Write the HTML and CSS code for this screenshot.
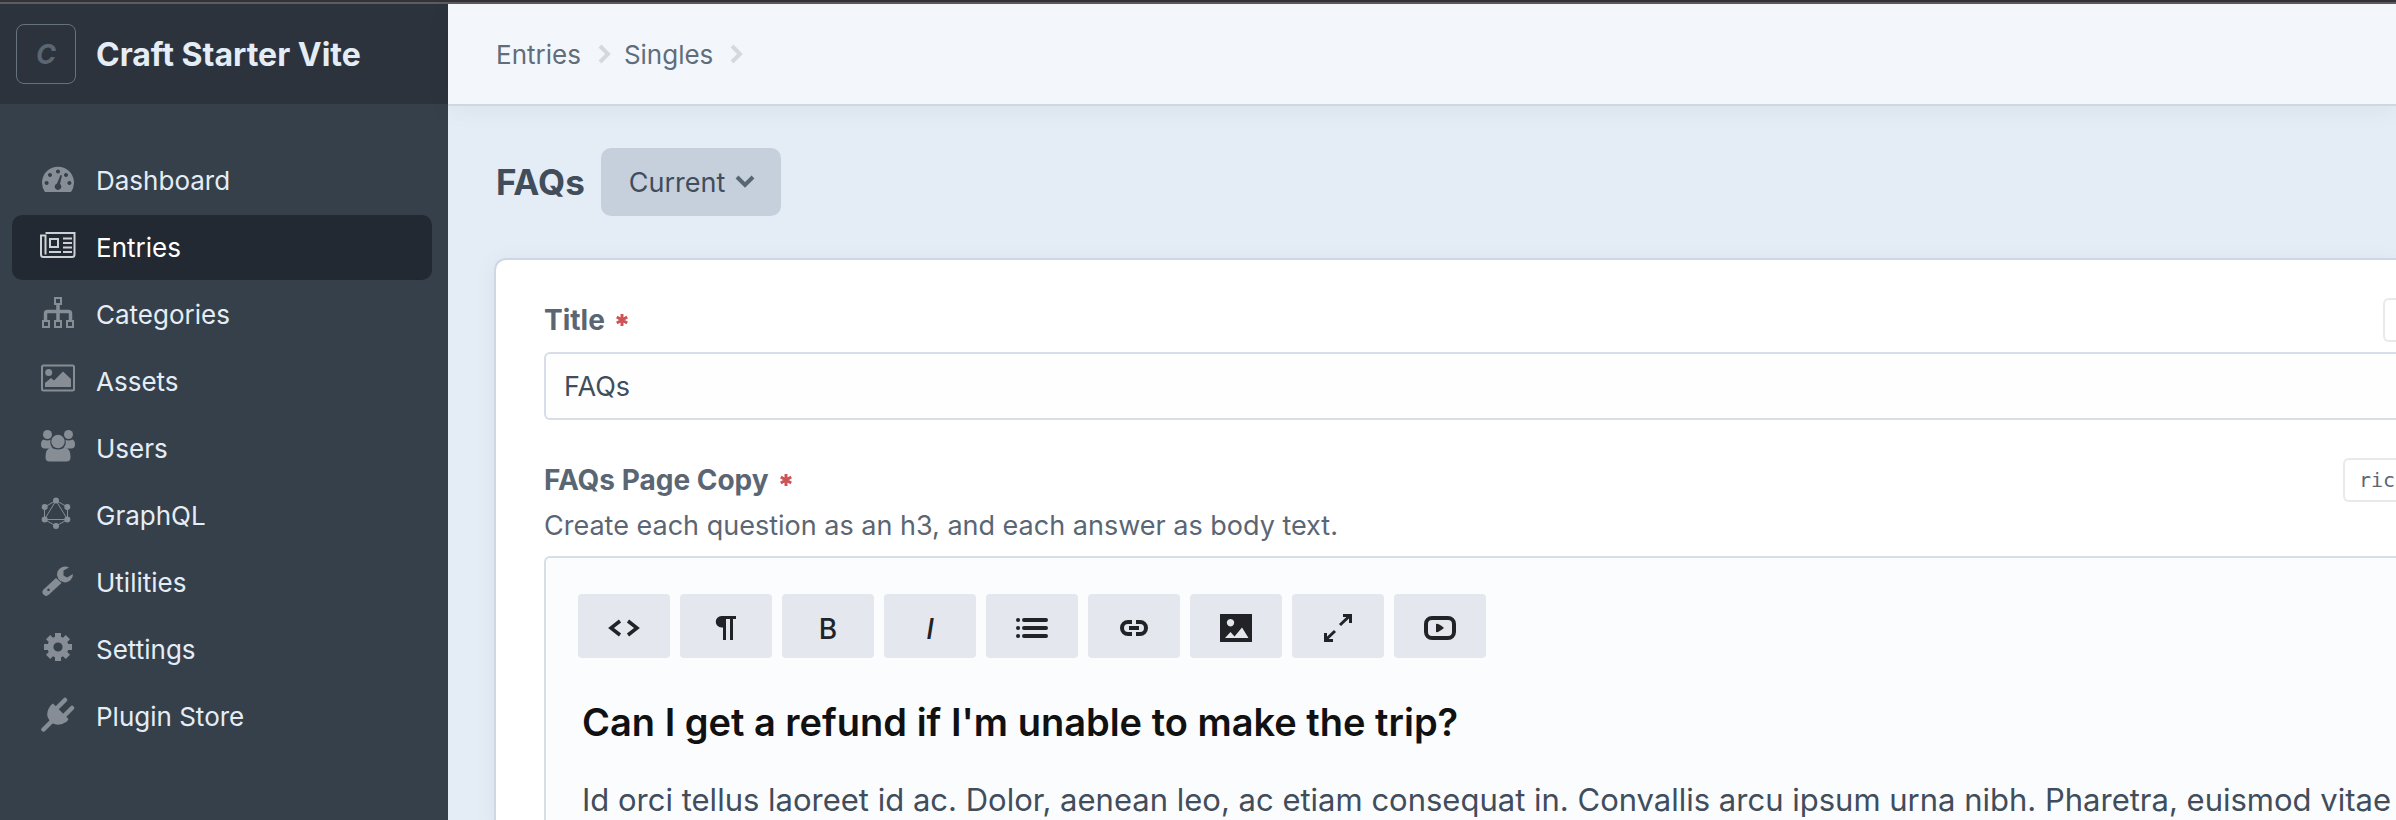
FILE: index.html
```html
<!DOCTYPE html>
<html lang="en">
<head>
<meta charset="utf-8">
<title>FAQs - Craft Starter Vite</title>
<link rel="stylesheet" href="styles.css">
</head>
<body>
<div class="topline"></div>
<div class="shell">
  <aside class="sidebar">
    <header class="site">
      <span class="site-icon">C</span>
      <span class="site-name">Craft Starter Vite</span>
    </header>
    <nav class="nav" aria-label="Primary">
      <a class="nav-item" href="#"><svg class="icon" viewBox="0 0 40 36"><path fill-rule="evenodd" d="M7 32a16 16 0 1 1 26 0zM20 9.500a2 2 0 1 0 .01 0zM12 13a2 2 0 1 0 .01 0zM28 13a2 2 0 1 0 .01 0zM8.600 21a2 2 0 1 0 .01 0zM31.400 21a2 2 0 1 0 .01 0zM22.500 15l-3.500 8.500a3.300 3.300 0 1 0 3 .5l2-8.500z"/></svg>Dashboard</a>
      <a class="nav-item active" href="#" aria-current="page"><svg class="icon" viewBox="0 0 40 36"><path class="line" d="M7.500 6h29v21.500a2.500 2.500 0 0 1-2.500 2.500H5.500a2.500 2.500 0 0 1-2.500-2.500V8.500h4.500v19M12 12h8v8h-8zM25 11.500h9M25 16h9M25 20.500h9M11 25h12M25 25h9"/></svg>Entries</a>
      <a class="nav-item" href="#"><svg class="icon" viewBox="0 0 40 36"><g class="line"><path d="M17 4h6v6h-6zM5 27h6v6H5zM17 27h6v6h-6zM29 27h6v6h-6z"/><path stroke-width="3.500" d="M20 10v16M7.500 26v-6.500a2 2 0 0 1 2-2h21a2 2 0 0 1 2 2V26"/></g></svg>Categories</a>
      <a class="nav-item" href="#"><svg class="icon" viewBox="0 0 40 36"><rect class="line" x="4" y="4.500" width="32" height="25" rx="1.500"/><circle cx="10.700" cy="11.500" r="3.500"/><path d="M7 26v-4l6-5 3 2.500 9-9 8 7.500v8z"/></svg>Assets</a>
      <a class="nav-item" href="#"><svg class="icon" viewBox="0 0 40 36"><circle cx="9.500" cy="6.500" r="4.500"/><circle cx="30.500" cy="6.500" r="4.500"/><path d="M5.500 11.500q4 2 7 .3-1 5 2 7.700-2 1-4 1H6q-3-.5-3-4 0-4 2.500-5zM34.500 11.500q-4 2-7 .3 1 5-2 7.700 2 1 4 1H34q3-.5 3-4 0-4-2.500-5z"/><circle cx="20" cy="13.500" r="6.700"/><path d="M13 19.500q7 4 14 0 5.500 1 5.500 10 0 4-4 4h-17q-4 0-4-4 0-9 5.500-10z"/></svg>Users</a>
      <a class="nav-item" href="#"><svg class="icon" viewBox="0 0 40 36"><path class="line thin" d="M18 5.500L29.500 12v12.500L18 31 6.500 24.500V12zM18 5.500L6.500 24.500h23z"/><circle cx="18" cy="5.500" r="3"/><circle cx="29.300" cy="12" r="3"/><circle cx="29.300" cy="24.500" r="3"/><circle cx="18" cy="31" r="3"/><circle cx="6.700" cy="24.500" r="3"/><circle cx="6.700" cy="12" r="3"/></svg>GraphQL</a>
      <a class="nav-item" href="#"><svg class="icon" viewBox="0 0 40 36"><path fill-rule="evenodd" d="M31 5.500l-5.500 3v5l3.500 2 6-3.500a8 8 0 1 1-4-6.500zM18 16l5.500 5L11 32.500a3.500 3.500 0 0 1-5.500-5zM10.500 26.500a1.300 1.300 0 1 0 .01 0z"/></svg>Utilities</a>
      <a class="nav-item" href="#"><svg class="icon" viewBox="0 0 40 36"><circle cx="20" cy="18" r="7.600" fill="none" stroke="currentColor" stroke-width="6"/><path stroke="currentColor" stroke-width="6" d="M20 4v5M20 27v5M6 18h5M29 18h5M10.100 8.100l4 4M25.900 23.900l4 4M29.900 8.100l-4 4M14.100 23.900l-4 4"/></svg>Settings</a>
      <a class="nav-item" href="#"><svg class="icon" viewBox="0 0 40 36"><path d="M15 7.500L30.500 23l-1.500 2.500q-8 5.500-15 1.500-9-8-1-18z"/><path d="M20 11l7-7M27 19l7-7M14 25L5.500 33.500" fill="none" stroke="currentColor" stroke-width="4.500" stroke-linecap="round"/></svg>Plugin Store</a>
    </nav>
  </aside>
  <div class="page">
    <nav class="crumbs" aria-label="Breadcrumb">
      <a href="#">Entries</a>
      <svg class="crumb-sep" viewBox="0 0 14 20"><path d="M2 2l8 8-8 8"/></svg>
      <a href="#">Singles</a>
      <svg class="crumb-sep" viewBox="0 0 14 20"><path d="M2 2l8 8-8 8"/></svg>
    </nav>
    <main class="main">
      <div class="heading">
        <h1>FAQs</h1>
        <button class="revision" type="button">Current<svg class="chevron" viewBox="0 0 20 14"><path d="M2 2l8 8 8-8"/></svg></button>
      </div>
      <form class="card">
        <div class="field">
          <div class="field-head">
            <label for="title">Title</label>
            <svg class="required" viewBox="0 0 12 12"><path d="M6 0v12M.8 3l10.400 6M11.200 3L.8 9"/></svg>
            <code class="handle narrow"></code>
          </div>
          <input class="text" id="title" type="text" value="FAQs">
        </div>
        <div class="field grow">
          <div class="field-head">
            <label id="copy-label">FAQs Page Copy</label>
            <svg class="required" viewBox="0 0 12 12"><path d="M6 0v12M.8 3l10.400 6M11.200 3L.8 9"/></svg>
            <code class="handle">ric</code>
          </div>
          <p class="hint">Create each question as an h3, and each answer as body text.</p>
          <div class="editor">
            <div class="toolbar" role="toolbar">
              <button type="button" aria-label="HTML"><svg viewBox="0 0 36 32"><path class="ink" stroke-width="3.500" d="M14 9L5 16l9 7M22 9l9 7-9 7"/></svg></button>
              <button type="button" aria-label="Format"><svg viewBox="0 0 36 32"><path d="M28 4H13.500a5.500 5.500 0 0 0 0 11.500H15V28h3V7h4v21h3V7h3z"/></svg></button>
              <button type="button" class="letter">B</button>
              <button type="button" class="letter"><i>I</i></button>
              <button type="button" aria-label="Lists"><svg viewBox="0 0 36 32"><path class="ink round" stroke-width="4" d="M10 8h22M10 16h22M10 24h22M4 8h.1M4 16h.1M4 24h.1"/></svg></button>
              <button type="button" aria-label="Link"><svg viewBox="0 0 36 32"><path class="ink" stroke-width="4" d="M16 10h-4a6 6 0 0 0 0 12h4M20 10h4a6 6 0 0 1 0 12h-4M13 16h10"/></svg></button>
              <button type="button" aria-label="Image"><svg viewBox="0 0 36 32"><path fill-rule="evenodd" d="M2 2h32v28H2zM12.500 7a3.700 3.700 0 1 0 .01 0zM7 26l5.500-6 4 4.500 7.500-9L30.500 26z"/></svg></button>
              <button type="button" aria-label="Fullscreen"><svg viewBox="0 0 36 32"><path class="ink" stroke-width="3" d="M20 13L30 3.500M23 3.500h7.500V11M15 19L5 28.500M13 28.500H5.500V21"/></svg></button>
              <button type="button" aria-label="Video"><svg viewBox="0 0 36 32"><rect class="ink" stroke-width="4" x="4" y="6" width="28" height="20" rx="6"/><path d="M14 12q2-1 8 4-6 5-8 4z"/></svg></button>
            </div>
            <div class="content" contenteditable="true" aria-labelledby="copy-label">
              <h3>Can I get a refund if I'm unable to make the trip?</h3>
              <p>Id orci tellus laoreet id ac. Dolor, aenean leo, ac etiam consequat in. Convallis arcu ipsum urna nibh. Pharetra, euismod vitae</p>
            </div>
          </div>
        </div>
      </form>
    </main>
  </div>
</div>
</body>
</html>
```
FILE: styles.css
```css
* { box-sizing: border-box; }
body {
  margin: 0;
  height: 100vh;
  overflow: hidden;
  display: flex;
  flex-direction: column;
  background: #e4ecf5;
  color: #414d5b;
  font-family: Inter, "Liberation Sans", sans-serif;
  font-size: 27px;
}
a { color: inherit; text-decoration: none; }
h1, h3, p { margin: 0; }
button, input { font: inherit; color: inherit; }
.topline { flex: none; height: 4px; background: #333237; border-bottom: 2px solid #5f5c60; }
.shell { flex: 1; display: flex; min-height: 0; }

.sidebar { flex: none; width: 448px; background: #36404b; color: #e4edf6; }
.site { display: flex; align-items: center; gap: 20px; height: 100px; padding: 0 16px; background: #2c333d; }
.site-icon {
  display: flex; align-items: center; justify-content: center;
  width: 60px; height: 60px;
  border: 1px solid #66727e; border-radius: 8px;
  color: #5c6672; font-size: 27px; font-weight: 700; font-style: italic;
}
.site-name { font-size: 32px; font-weight: 700; }
.nav { display: flex; flex-direction: column; gap: 2px; padding: 44px 16px 0 12px; }
.nav-item { display: flex; align-items: center; gap: 18px; height: 65px; padding-left: 26px; border-radius: 10px; font-size: 26px; }
.nav-item.active { background: #222933; color: #fff; }
.icon { width: 40px; height: 36px; margin-bottom: 5px; fill: currentColor; color: #868d95; }
.active .icon { color: #ced1d4; }
.line { fill: none; stroke: currentColor; stroke-width: 2; }
.thin { stroke-width: 1; }

.page { flex: 1; min-width: 0; display: flex; flex-direction: column; }
.crumbs {
  flex: none; display: flex; align-items: center; gap: 12px;
  height: 102px; padding-left: 48px;
  background: #f3f7fc; border-bottom: 2px solid #cdd8e2;
  box-shadow: 0 4px 24px rgba(31, 41, 51, 0.05);
  color: #606d7b; font-size: 26px;
}
.crumb-sep { width: 14px; height: 20px; margin-left: 5px; fill: none; stroke: #d5d9de; stroke-width: 4; }
.main { flex: 1; min-height: 0; display: flex; flex-direction: column; padding: 42px 0 0 46px; }
.heading { display: flex; align-items: center; gap: 16px; padding-left: 2px; margin-bottom: 42px; }
h1 { font-size: 35px; line-height: 44px; font-weight: 700; }
.revision {
  display: flex; align-items: center; gap: 10px;
  height: 68px; padding: 0 26px 0 28px;
  border: 0; border-radius: 10px; background: #c5d0dc;
}
.chevron { width: 20px; height: 14px; fill: none; stroke: #596673; stroke-width: 4; }

.card {
  flex: 1; display: flex; flex-direction: column; gap: 38px;
  padding: 38px 0 0 48px;
  background: #fff; border: solid #ced8e4; border-width: 2px 0 0 2px;
  border-radius: 12px 0 0 0;
  box-shadow: 0 4px 24px rgba(31, 41, 51, 0.05);
}
.field { display: flex; flex-direction: column; }
.grow { flex: 1; }
.field-head { display: flex; align-items: center; height: 44px; margin-bottom: 10px; color: #5a6673; font-size: 28px; font-weight: 700; }
.required { width: 12px; height: 12px; margin-left: 11px; stroke: #cf5355; stroke-width: 3; }
.handle {
  width: 53px; height: 44px; margin-left: auto; padding-left: 14px;
  border: 2px solid #e9e9ea; border-right: 0; border-radius: 6px 0 0 6px;
  font: 20px/40px "DejaVu Sans Mono", monospace;
}
.narrow { width: 13px; padding: 0; }
.text {
  width: 100%; height: 68px; padding: 0 18px;
  border: 2px solid #d8dde8; border-right: 0; border-radius: 6px 0 0 6px; background: #fefefe;
}
.hint { margin: -6px 0 10px; line-height: 40px; color: #5a6673; }
.editor { flex: 1; padding: 36px 0 0 32px; background: #fbfcfe; border: solid #d6dee6; border-width: 2px 0 0 2px; border-radius: 6px 0 0 0; }
.toolbar { display: flex; gap: 10px; margin-bottom: 40px; }
.toolbar button {
  display: flex; align-items: center; justify-content: center;
  width: 92px; height: 64px; padding: 4px 0 0;
  border: 0; border-radius: 4px; background: #e4e7ee; color: #222326;
}
.toolbar svg { width: 36px; height: 32px; fill: currentColor; }
.toolbar .ink { fill: none; stroke: currentColor; }
.round { stroke-linecap: round; }
.toolbar .letter { font-size: 28px; font-weight: 500; padding-top: 6px; }
.content { padding-left: 4px; outline: 0; }
h3 { margin-bottom: 30px; font-size: 38px; line-height: 48px; font-weight: 600; color: #111; }
.content p { font-size: 31px; line-height: 48px; white-space: nowrap; }
```
